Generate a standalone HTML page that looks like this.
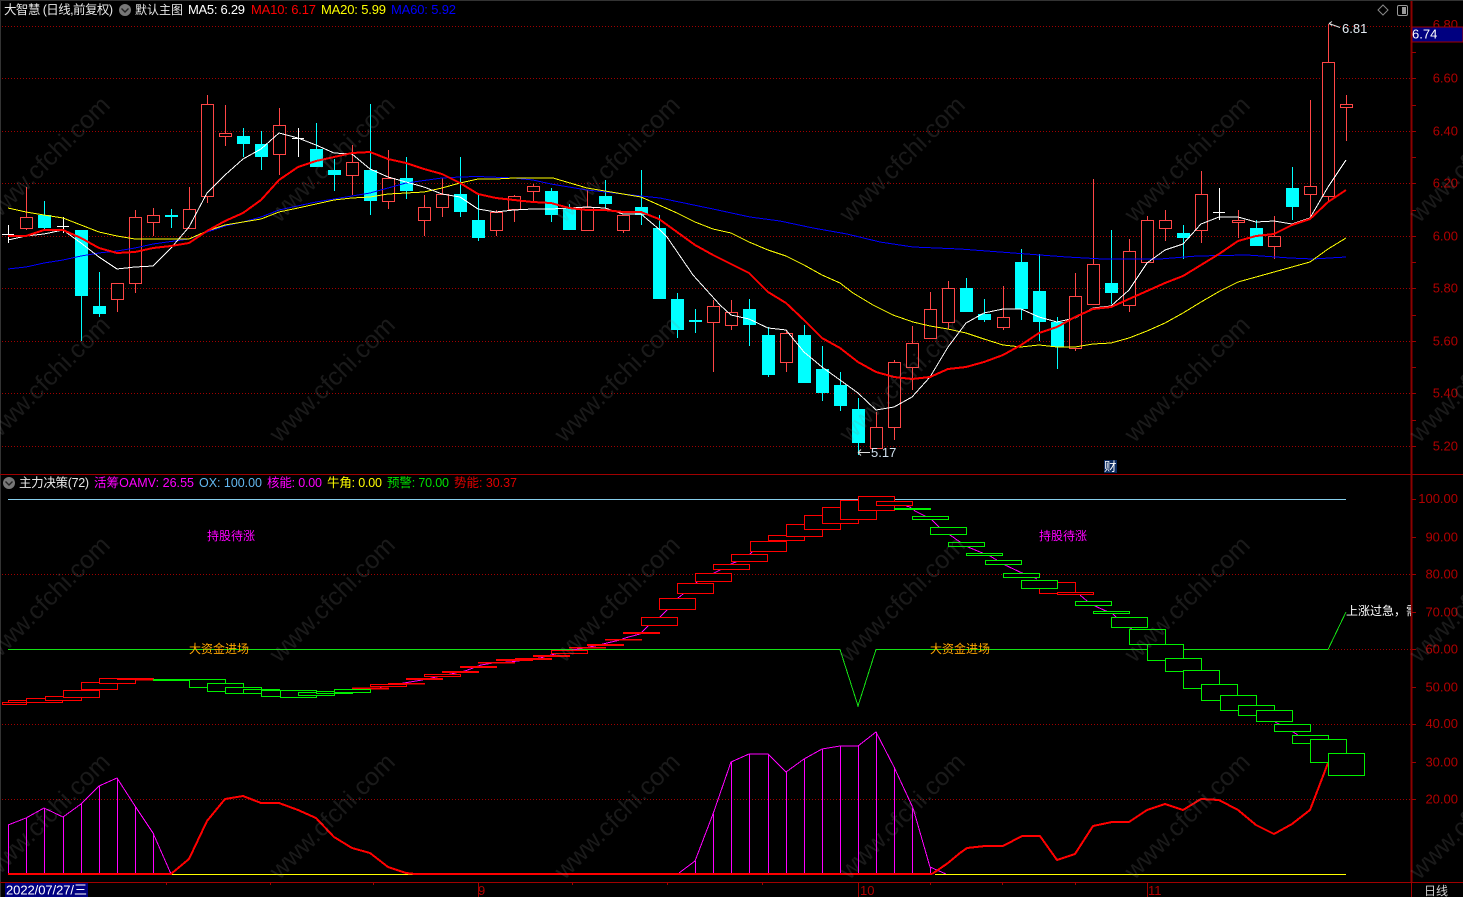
<!DOCTYPE html>
<html><head><meta charset="utf-8"><title>大智慧</title>
<style>html,body{margin:0;padding:0;background:#000;overflow:hidden}svg{display:block}text{font-family:"Liberation Sans","Noto Sans CJK SC",sans-serif}</style></head>
<body>
<svg width="1463" height="897" viewBox="0 0 1463 897" xmlns="http://www.w3.org/2000/svg" shape-rendering="crispEdges">
<rect width="1463" height="897" fill="#000"/>
<path d="M0 .5H1463M.5 0V897" stroke="#333" fill="none"/>
<!-- grid -->
<path d="M2 26.5H1411M2 78.5H1411M2 131.5H1411M2 183.5H1411M2 236.5H1411M2 288.5H1411M2 341.5H1411M2 393.5H1411M2 446.5H1411M2 574.5H1411M2 724.5H1411M2 799.5H1411M1329 649.5H1411" stroke="#a00000" stroke-dasharray="1 2" fill="none"/>
<!-- axes -->
<path d="M0 474.5H1463M0 882.5H1463" stroke="#a00000" fill="none"/>
<path d="M1411.5 1V882" stroke="#8b0000" stroke-width="2" fill="none"/>
<path d="M1411.5 882V897M1412 52.5h4M1412 78.5h4M1412 105.5h4M1412 131.5h4M1412 157.5h4M1412 183.5h4M1412 210.5h4M1412 236.5h4M1412 262.5h4M1412 288.5h4M1412 315.5h4M1412 341.5h4M1412 367.5h4M1412 393.5h4M1412 420.5h4M1412 446.5h4M1412 499.5h4M1412 537.5h4M1412 574.5h4M1412 612.5h4M1412 649.5h4M1412 687.5h4M1412 724.5h4M1412 762.5h4M1412 799.5h4M166.5 882v3M270.5 882v3M373.5 882v3M478.5 882v15M572.5 882v3M667.5 882v3M762.5 882v3M858.5 882v15M930.5 882v3M1002.5 882v3M1075.5 882v3M1147.5 882v15" stroke="#a00000" fill="none"/>
<!-- axis labels -->
<g fill="#b00000" font-size="13" text-anchor="end" shape-rendering="auto">
<text x="1458" y="29">6.80</text><text x="1458" y="82.5">6.60</text><text x="1458" y="135.5">6.40</text><text x="1458" y="187.5">6.20</text><text x="1458" y="240.5">6.00</text><text x="1458" y="292.5">5.80</text><text x="1458" y="345.5">5.60</text><text x="1458" y="397.5">5.40</text><text x="1458" y="450.5">5.20</text>
<text x="1458" y="503">100.00</text><text x="1458" y="541.5">90.00</text><text x="1458" y="578.5">80.00</text><text x="1458" y="616.5">70.00</text><text x="1458" y="653.5">60.00</text><text x="1458" y="691.5">50.00</text><text x="1458" y="728">40.00</text><text x="1458" y="766.5">30.00</text><text x="1458" y="803.5">20.00</text>
</g>
<rect x="1412" y="27" width="51" height="15" fill="#000080" stroke="#a00000" stroke-width="1"/>
<text x="1412" y="38.5" font-size="13" fill="#fff">6.74</text>
<!-- wicks -->
<path fill="none" stroke="#ff4646" d="M26.5 187V230M117.5 283V312M135.5 210V293M153.5 208V236M189.5 187V229M207.5 95V203M225.5 105V146M279.5 108V175M352.5 145V195M388.5 150V209M424.5 195V236M442.5 178V217M496.5 210V236M514.5 195V222M533.5 184V203M587.5 190V231M623.5 215V233M713.5 300V372M731.5 300V330M786.5 330V372M876.5 412V449M894.5 360V440M912.5 326V390M930.5 292V339M948.5 281V329M1003.5 286V330M1075.5 273V351M1093.5 179V305M1129.5 239V312M1147.5 216V263M1165.5 210V241M1201.5 171V243M1238.5 210V238M1274.5 216V259M1310.5 100V216M1328.5 24V202M1346.5 95V141"/>
<path fill="none" stroke="#00ffff" d="M44.5 201V229M81.5 230V341M99.5 272V317M171.5 209V228M243.5 128V157M261.5 131V170M316.5 123V167M334.5 159V191M370.5 104V215M406.5 157V199M460.5 157V217M478.5 195V241M551.5 188V222M569.5 204V230M605.5 180V208M641.5 170V225M659.5 215V299M677.5 293V338M695.5 309V333M749.5 299V346M768.5 327V377M804.5 325V383M822.5 346V401M840.5 372V411M858.5 398V455M966.5 278V312M984.5 299V322M1021.5 249V320M1039.5 254V341M1057.5 317V369M1111.5 230V304M1183.5 225V259M1256.5 220V246M1292.5 167V220"/>
<path fill="none" stroke="#fff" d="M8.5 225V243M2 234.5H14M63.5 217V233M57 226.5H69M298.5 128V157M292 138.5H304M1219.5 188V220M1213 212.5H1225"/>
<!-- hollow red bodies -->
<path fill="#000" stroke="#ff4646" d="M20.5 217.5h12V228.5h-12zM111.5 283.5h12V299.5h-12zM129.5 217.5h12V283.5h-12zM147.5 215.5h12V222.5h-12zM183.5 209.5h12V228.5h-12zM201.5 104.5h12V196.5h-12zM219.5 133.5h12V136.5h-12zM273.5 125.5h12V154.5h-12zM346.5 162.5h12V175.5h-12zM382.5 178.5h12V201.5h-12zM418.5 207.5h12V220.5h-12zM436.5 194.5h12V207.5h-12zM490.5 212.5h12V230.5h-12zM508.5 196.5h12V209.5h-12zM527.5 186.5h12V191.5h-12zM581.5 207.5h12V230.5h-12zM617.5 215.5h12V230.5h-12zM707.5 306.5h12V322.5h-12zM725.5 312.5h12V325.5h-12zM780.5 333.5h12V362.5h-12zM870.5 427.5h12V448.5h-12zM888.5 362.5h12V427.5h-12zM906.5 343.5h12V367.5h-12zM924.5 309.5h12V338.5h-12zM942.5 288.5h12V322.5h-12zM997.5 317.5h12V327.5h-12zM1069.5 296.5h12V348.5h-12zM1087.5 264.5h12V304.5h-12zM1123.5 251.5h12V305.5h-12zM1141.5 220.5h12V262.5h-12zM1159.5 220.5h12V228.5h-12zM1195.5 194.5h12V230.5h-12zM1232.5 220.5h12V222.5h-12zM1268.5 236.5h12V246.5h-12zM1304.5 186.5h12V194.5h-12zM1322.5 62.5h12V196.5h-12zM1340.5 104.5h12V107.5h-12z"/>
<!-- cyan bodies -->
<path fill="#00ffff" d="M38 215h13v13h-13zM75 230h13v66h-13zM93 306h13v8h-13zM165 215h13v2h-13zM237 136h13v8h-13zM255 144h13v13h-13zM310 149h13v18h-13zM328 170h13v5h-13zM364 170h13v31h-13zM400 178h13v13h-13zM454 194h13v18h-13zM472 220h13v18h-13zM545 191h13v24h-13zM563 208h13v22h-13zM599 196h13v8h-13zM635 207h13v8h-13zM653 228h13v71h-13zM671 299h13v31h-13zM689 320h13v2h-13zM743 309h13v16h-13zM762 335h13v40h-13zM798 335h13v48h-13zM816 369h13v24h-13zM834 385h13v21h-13zM852 409h13v34h-13zM960 288h13v24h-13zM978 314h13v6h-13zM1015 262h13v47h-13zM1033 291h13v31h-13zM1051 322h13v25h-13zM1105 283h13v10h-13zM1177 233h13v5h-13zM1250 228h13v18h-13zM1286 188h13v19h-13z"/>
<!-- MAs -->
<g fill="none" stroke-linejoin="round">
<polyline stroke="#0000ff" stroke-width="1" points="8,269 26,267 44,263 63,260 81,256 99,253 117,251 135,248 153,244 189,239 207,232 225,226 243,222 261,217 279,210 316,202 352,196 370,193 406,183 442,178 460,177 478,176.5 514,178 533,180 551,184 569,187 587,190 605,192 641,196 660,198 713,209 750,217 780,221 813,228 847,234 880,242 913,247 960,249 1000,252 1040,255 1067,257 1103,259 1160,259 1197,256 1247,255 1290,258 1313,259 1346,257"/>
<polyline stroke="#ffff00" stroke-width="1" points="8,208 26,212 44,215 63,218 81,225 99,232 117,236 135,239 153,239 171,239 189,239 207,231 225,225 243,222 261,219 279,212 298,208 316,204 334,200 352,198 370,197 388,194 406,193 424,192 442,188 460,183 478,179 496,179 514,178 533,178 553,178 570,183 587,188 605,191 623,194 641,197 659,205 677,213 695,222 713,229 731,233 749,242 768,250 786,256 804,265 822,275 840,283 853,293 873,305 893,315 913,322 930,326 948,329 966,333 984,339 1003,345 1021,347 1039,345 1057,347 1075,347 1093,344 1111,343 1129,338 1147,331 1165,323 1183,313 1201,302 1220,291 1238,282 1256,277 1274,272 1292,267 1310,262 1328,249 1346,238"/>
<polyline stroke="#ffffff" stroke-width="1" points="8,240 26,236 44,234 63,230 81,243 99,257 117,269 135,267 153,266 171,248 189,227 207,193 225,175 243,159 261,149 279,133 298,138 316,145 334,153 352,154 370,169 388,177 406,182 424,187 442,194 460,197 478,209 496,212 514,210 533,209 551,209 569,208 587,207 605,208 623,214 641,214 660,230 667,237 693,275 720,305 731,315 749,319 768,328 786,330 804,352 822,367 840,380 858,393 876,410 894,407 912,397 930,377 948,347 966,323 984,313 1003,309 1021,309 1039,317 1057,322 1075,318 1093,308 1111,306 1129,290 1147,263 1165,250 1183,244 1201,224 1219,217 1238,217 1256,222 1274,221 1292,224 1310,218 1328,187 1346,160"/>
<polyline stroke="#ff0000" stroke-width="2" points="8,236 26,236 44,230 63,230 81,238 99,248 117,253 135,252 153,248 171,246 189,243 207,231 225,221 243,213 261,200 279,180 298,167 316,161 334,157 352,153 370,152 388,159 406,163 424,169 442,174 460,183 478,194 496,198 514,200 533,202 551,203 569,208 587,210 605,210 623,212 641,212 659,219 677,232 695,245 713,255 731,264 749,273 768,292 786,303 804,320 822,338 840,348 858,362 876,372 894,377 912,379 930,377 948,369 966,367 984,362 1003,355 1021,345 1039,333 1057,327 1075,317 1093,309 1111,307 1129,299 1147,291 1165,283 1183,276 1201,265 1219,254 1238,241 1256,236 1274,234 1292,225 1310,219 1328,202 1346,190"/>
</g>
<!-- price marks -->
<path d="M1329 23.5l11 4M1329 23.5l3-2M1329 23.5l3 2M858 452.5h12M858 452.5l3-3M858 452.5l3 3" stroke="#ddd" fill="none" shape-rendering="auto"/>
<g shape-rendering="auto">
<text x="1342" y="33" font-size="13" fill="#e4ecf4">6.81</text>
<text x="871" y="457" font-size="13" fill="#d0e0ee">5.17</text>
<rect x="1104" y="460" width="13" height="13" fill="#0a2a60"/>
<text x="1104" y="471" font-size="12.5" fill="#fff">财</text>
<!-- header -->
<text x="4" y="14" font-size="12.5" fill="#e8e8e8" textLength="109">大智慧 (日线,前复权)</text>
<circle cx="125" cy="10" r="6" fill="#777"/><path d="M121.500 8.500l3.500 3.500 3.500-3.500" fill="none" stroke="#222" stroke-width="1.400"/>
<text x="135" y="14" font-size="12" fill="#e8e8e8" textLength="48">默认主图</text>
<text x="188" y="14" font-size="13" fill="#fff" textLength="57">MA5: 6.29</text>
<text x="251" y="14" font-size="13" fill="#ff0000" textLength="65">MA10: 6.17</text>
<text x="321" y="14" font-size="13" fill="#ffff00" textLength="65">MA20: 5.99</text>
<text x="391" y="14" font-size="13" fill="#0000ff" textLength="65">MA60: 5.92</text>
<path d="M1383 5l5 5-5 5-5-5z" fill="none" stroke="#888"/>
<rect x="1397.500" y="5.500" width="10" height="10" rx="1.500" fill="none" stroke="#999"/><rect x="1402" y="7" width="4" height="7" fill="#999"/>
<!-- panel legend -->
<circle cx="9" cy="483" r="6" fill="#777"/><path d="M5.500 481.500l3.500 3.500 3.500-3.500" fill="none" stroke="#222" stroke-width="1.400"/>
<text x="19" y="487" font-size="12.5" fill="#e8e8e8" textLength="70">主力决策(72)</text>
<text x="94" y="487" font-size="12.5" fill="#ff00ff" textLength="100">活筹OAMV: 26.55</text>
<text x="199" y="487" font-size="12.5" fill="#63b8f0" textLength="63">OX: 100.00</text>
<text x="267" y="487" font-size="12.5" fill="#ff00ff" textLength="55">核能: 0.00</text>
<text x="327" y="487" font-size="12.5" fill="#ffff00" textLength="55">牛角: 0.00</text>
<text x="387" y="487" font-size="12.5" fill="#00e000" textLength="62">预警: 70.00</text>
<text x="454" y="487" font-size="12.5" fill="#e00000" textLength="63">势能: 30.37</text>
</g>
<!-- lower panel lines -->
<path d="M8 499.500H1346" stroke="#87ceeb" fill="none"/>
<polyline fill="none" stroke="#14e014" points="8,649.500 840,649.500 858,706 876,649.500 1328,649.500 1346,612"/>
<!-- sticks + magenta -->
<path fill="none" stroke="#ff00ff" d="M8.500 825V874M26.500 818V874M44.500 808V874M63.500 817V874M81.500 804V874M99.500 786V874M117.500 778V874M135.500 806V874M153.500 833V874M695.500 861V874M713.500 814V874M731.500 762V874M749.500 754V874M768.500 754V874M786.500 772V874M804.500 759V874M822.500 749V874M840.500 746V874M858.500 746V874M876.500 732V874M894.500 767V874M912.500 808V874M930.500 867V874"/>
<polyline fill="none" stroke="#ff00ff" points="8,825 26,818 44,808 63,817 81,804 99,786 117,778 135,806 153,833 171,874"/>
<polyline fill="none" stroke="#ff00ff" points="679,873 695,861 713,814 731,762 749,754 768,754 786,772 804,759 822,749 840,746 858,746 876,732 894,767 913,808 930,867 946,874"/>
<path d="M172 874.500H415M935 874.500H1346" stroke="#ffff00" fill="none"/>
<path d="M8 874H172M415 874H932" stroke="#ff0000" stroke-width="2" fill="none"/>
<polyline fill="none" stroke="#ff0000" stroke-width="2" stroke-linejoin="round" points="171,874 189,859 207,821 225,799 243,796 261,803 279,803 298,810 316,818 334,837 352,848 370,853 388,867 406,873 415,874"/>
<polyline fill="none" stroke="#ff0000" stroke-width="2" stroke-linejoin="round" points="932,874 948,863 960,853 967,848 985,846 1003,846 1022,836 1040,836 1057,860 1075,854 1093,826 1112,822 1129,822 1147,810 1165,804 1183,810 1201,799 1219,800 1238,810 1256,825 1274,834 1292,824 1310,810 1328,763"/>
<!-- magenta connector under boxes -->
<polyline fill="none" stroke="#ff00ff" points="380,687 410,682 422,680 465,671 473,668 481,665 493,663 510,662 540,658 555,654 578,649 595,646 607,643 620,640 625,638 640,634 642,632 648,626 660,617 667,610 678,598 683,594 696,583 698,581 714,573 720,570 733,563 736,562 750,554 752,552"/>
<polyline fill="none" stroke="#ff00ff" points="906,506 910,507 915,511 925,516 932,520 939,527 950,535 960,542 968,547 980,552 990,556 1005,565 1022,573 1033,577 1037,579"/>
<polyline fill="none" stroke="#ff00ff" points="1080,595 1087,601 1095,606 1106,611 1112,613 1116,617 1130,628 1132,629"/>
<polyline fill="none" stroke="#ff00ff" points="1275,722 1279,724 1293,732 1298,735"/>
<!-- red boxes -->
<g fill="#000" stroke="#ff0000">
<rect x="2.500" y="702.500" width="24" height="2"/><rect x="8.500" y="700.500" width="36" height="2"/><rect x="26.500" y="698.500" width="36" height="4"/><rect x="45.500" y="696.500" width="36" height="4"/><rect x="63.500" y="690.500" width="36" height="7"/><rect x="81.500" y="682.500" width="36" height="7"/><rect x="99.500" y="678.500" width="36" height="5"/><rect x="117.500" y="678.500" width="36" height="1"/><rect x="135.500" y="679.500" width="36" height="0.500"/>
<rect x="352.500" y="688" width="36" height="1"/><rect x="370.500" y="684.500" width="36" height="2"/><rect x="388.500" y="683.500" width="36" height="0.500"/><rect x="406.500" y="678.500" width="36" height="1"/><rect x="424.500" y="674.500" width="36" height="2"/><rect x="442.500" y="671.500" width="36" height="1"/><rect x="460.500" y="666.500" width="36" height="1"/><rect x="478.500" y="662.500" width="36" height="0.500"/><rect x="496.500" y="659.500" width="36" height="1"/><rect x="515.500" y="658.500" width="36" height="1"/><rect x="533.500" y="655.500" width="36" height="1"/><rect x="551.500" y="650.500" width="36" height="3"/><rect x="569.500" y="647.500" width="36" height="0.500"/><rect x="587.500" y="644.500" width="36" height="1"/><rect x="605.500" y="639.500" width="36" height="0.500"/><rect x="623.500" y="632.500" width="36" height="1"/>
<rect x="641.500" y="617.500" width="36" height="8"/><rect x="659.500" y="598.500" width="36" height="11"/><rect x="677.500" y="583.500" width="36" height="10"/><rect x="695.500" y="573.500" width="36" height="8"/><rect x="713.500" y="564.500" width="36" height="5"/><rect x="731.500" y="554.500" width="36" height="7"/><rect x="750.500" y="541.500" width="36" height="10"/><rect x="768.500" y="535.500" width="36" height="5"/><rect x="786.500" y="524.500" width="36" height="12"/><rect x="804.500" y="515.500" width="36" height="14"/><rect x="822.500" y="507.500" width="36" height="16"/><rect x="840.500" y="500.500" width="36" height="19"/><rect x="858.500" y="496.500" width="36" height="14"/><rect x="876.500" y="501.500" width="36" height="4"/>
<rect x="1039.500" y="582.500" width="36" height="11"/><rect x="1057.500" y="592.500" width="36" height="2"/>
</g>
<!-- green boxes -->
<g fill="#000" stroke="#00f000">
<rect x="153.500" y="679.500" width="36" height="1"/><rect x="171.500" y="679.500" width="36" height="1"/><rect x="189.500" y="679.500" width="36" height="8"/><rect x="207.500" y="683.500" width="36" height="8"/><rect x="225.500" y="687.500" width="36" height="6"/><rect x="243.500" y="689.500" width="36" height="4"/><rect x="261.500" y="690.500" width="36" height="6"/><rect x="280.500" y="690.500" width="36" height="7"/><rect x="298.500" y="692.500" width="36" height="3"/><rect x="316.500" y="691.500" width="36" height="2"/><rect x="334.500" y="689.500" width="36" height="3"/>
<rect x="894.500" y="508.500" width="36" height="1"/><rect x="912.500" y="516.500" width="36" height="3"/><rect x="930.500" y="527.500" width="36" height="7"/><rect x="948.500" y="542.500" width="36" height="4"/><rect x="966.500" y="553.500" width="36" height="2"/><rect x="985.500" y="560.500" width="36" height="4"/><rect x="1003.500" y="573.500" width="36" height="4"/><rect x="1021.500" y="580.500" width="36" height="8"/><rect x="1075.500" y="601.500" width="36" height="4"/><rect x="1093.500" y="611.500" width="36" height="2"/><rect x="1111.500" y="617.500" width="36" height="10"/><rect x="1129.500" y="629.500" width="36" height="15"/><rect x="1147.500" y="644.500" width="36" height="16"/><rect x="1165.500" y="658.500" width="36" height="13"/><rect x="1183.500" y="670.500" width="36" height="18"/><rect x="1201.500" y="684.500" width="36" height="16"/><rect x="1220.500" y="695.500" width="36" height="15"/><rect x="1238.500" y="705.500" width="36" height="10"/><rect x="1256.500" y="710.500" width="36" height="11"/><rect x="1274.500" y="724.500" width="36" height="7"/><rect x="1292.500" y="735.500" width="36" height="8"/><rect x="1310.500" y="739.500" width="36" height="23"/><rect x="1328.500" y="753.500" width="36" height="22"/>
</g>
<!-- labels -->
<g shape-rendering="auto">
<text x="207" y="540" font-size="12" fill="#ff00ff">持股待涨</text>
<text x="1039" y="540" font-size="12" fill="#ff00ff">持股待涨</text>
<text x="189" y="653" font-size="12" fill="#ffa500">大资金进场</text>
<text x="930" y="653" font-size="12" fill="#ffa500">大资金进场</text>
<svg x="1346" y="600" width="65" height="20"><text x="0" y="15" font-size="12" fill="#fff">上涨过急，需要回调</text></svg>
<rect x="5" y="883" width="83" height="14" fill="#000080"/>
<text x="6" y="894.500" font-size="13" fill="#fff" textLength="81">2022/07/27/三</text>
<g fill="#b00000" font-size="13"><text x="478" y="895">9</text><text x="860" y="895">10</text><text x="1148" y="895">11</text></g>
<text x="1424" y="895" font-size="12" fill="#d0d0d0">日线</text>
<!-- watermark -->
<g font-size="25" fill="#808080" fill-opacity=".2" text-anchor="middle">
<text transform="translate(53 165) rotate(-45)">www.cfchi.com</text><text transform="translate(338 165) rotate(-45)">www.cfchi.com</text><text transform="translate(623 165) rotate(-45)">www.cfchi.com</text><text transform="translate(908 165) rotate(-45)">www.cfchi.com</text><text transform="translate(1193 165) rotate(-45)">www.cfchi.com</text><text transform="translate(1478 165) rotate(-45)">www.cfchi.com</text>
<text transform="translate(53 385) rotate(-45)">www.cfchi.com</text><text transform="translate(338 385) rotate(-45)">www.cfchi.com</text><text transform="translate(623 385) rotate(-45)">www.cfchi.com</text><text transform="translate(908 385) rotate(-45)">www.cfchi.com</text><text transform="translate(1193 385) rotate(-45)">www.cfchi.com</text><text transform="translate(1478 385) rotate(-45)">www.cfchi.com</text>
<text transform="translate(53 605) rotate(-45)">www.cfchi.com</text><text transform="translate(338 605) rotate(-45)">www.cfchi.com</text><text transform="translate(623 605) rotate(-45)">www.cfchi.com</text><text transform="translate(908 605) rotate(-45)">www.cfchi.com</text><text transform="translate(1193 605) rotate(-45)">www.cfchi.com</text><text transform="translate(1478 605) rotate(-45)">www.cfchi.com</text>
<text transform="translate(53 822) rotate(-45)">www.cfchi.com</text><text transform="translate(338 822) rotate(-45)">www.cfchi.com</text><text transform="translate(623 822) rotate(-45)">www.cfchi.com</text><text transform="translate(908 822) rotate(-45)">www.cfchi.com</text><text transform="translate(1193 822) rotate(-45)">www.cfchi.com</text><text transform="translate(1478 822) rotate(-45)">www.cfchi.com</text>
</g>
</g>
</svg>
</body></html>
